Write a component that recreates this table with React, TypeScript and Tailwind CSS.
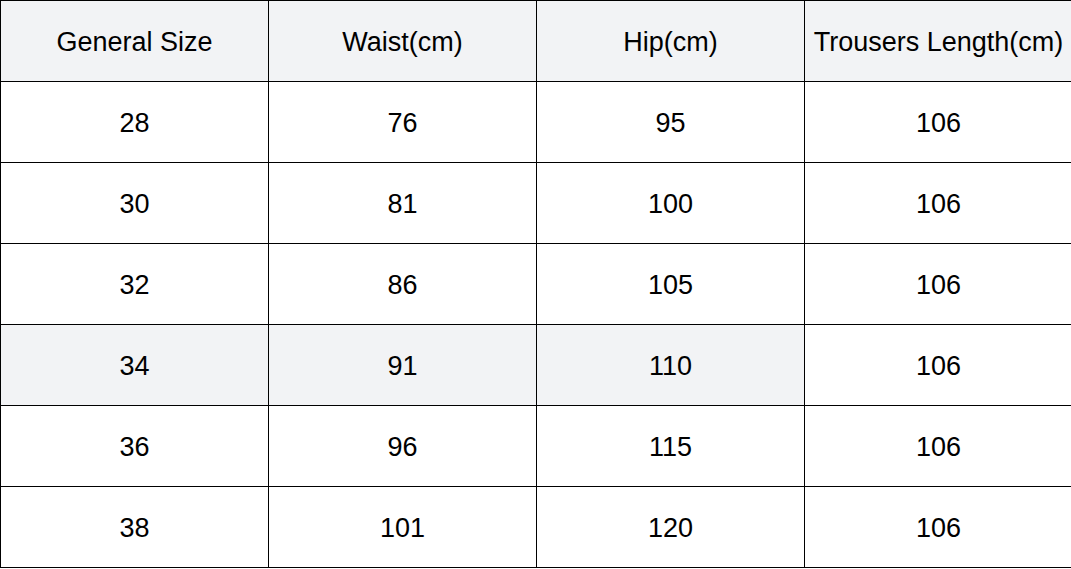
const header = ['General Size', 'Waist(cm)', 'Hip(cm)', 'Trousers Length(cm)'];

const rows = [
  ['28', '76', '95', '106'],
  ['30', '81', '100', '106'],
  ['32', '86', '105', '106'],
  ['34', '91', '110', '106'],
  ['36', '96', '115', '106'],
  ['38', '101', '120', '106'],
];

export default function App() {
  return (
    <div className="w-full h-[569px] overflow-hidden bg-white font-['Liberation_Sans',Arial,sans-serif] text-[27px] text-black">
      <div className="grid grid-cols-[repeat(4,268px)] w-max border-t border-l border-black">
        {header.map((h) => (
          <div key={h} className="h-[81px] pt-[2px] flex items-center justify-center bg-[#f2f3f5] border-r border-b border-black whitespace-nowrap">
            {h}
          </div>
        ))}
        {rows.map((r, i) =>
          r.map((c, j) => (
            <div
              key={i + '-' + j}
              className={
                'h-[81px] pt-[2px] flex items-center justify-center border-r border-b border-black ' +
                (i === 3 && j < 3 ? 'bg-[#f2f3f5]' : 'bg-white')
              }
            >
              {c}
            </div>
          ))
        )}
      </div>
    </div>
  );
}
